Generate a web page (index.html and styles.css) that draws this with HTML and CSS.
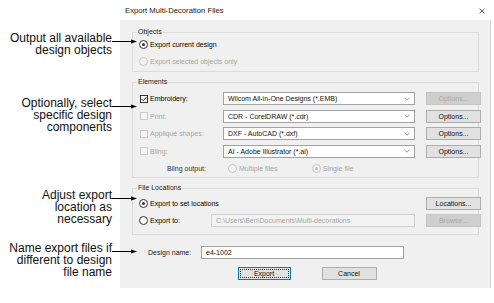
FILE: index.html
```html
<!DOCTYPE html>
<html lang="en">
<head>
<meta charset="UTF-8">
<title>Export Multi-Decoration Files</title>
<link rel="stylesheet" href="styles.css">
</head>
<body>

<div class="page">

    <!-- Подписи слева -->
    <div class="notes">
        <div class="note note-1">
            <div class="note-text">Output all available<br>design objects</div>
            <svg class="note-arrow" width="25" height="7" viewBox="0 0 25 7"><line x1="0" y1="3.5" x2="20" y2="3.5" stroke="#000" stroke-width="1"/><polygon points="19,1.5 25,3.5 19,5.5" fill="#000"/></svg>
        </div>
        <div class="note note-2">
            <div class="note-text">Optionally, select<br>specific design<br>components</div>
            <svg class="note-arrow" width="25" height="7" viewBox="0 0 25 7"><line x1="0" y1="3.5" x2="20" y2="3.5" stroke="#000" stroke-width="1"/><polygon points="19,1.5 25,3.5 19,5.5" fill="#000"/></svg>
        </div>
        <div class="note note-3">
            <div class="note-text">Adjust export<br>location as<br>necessary</div>
            <svg class="note-arrow" width="25" height="7" viewBox="0 0 25 7"><line x1="0" y1="3.5" x2="20" y2="3.5" stroke="#000" stroke-width="1"/><polygon points="19,1.5 25,3.5 19,5.5" fill="#000"/></svg>
        </div>
        <div class="note note-4">
            <div class="note-text">Name export files if<br>different to design<br>file name</div>
            <svg class="note-arrow" width="25" height="7" viewBox="0 0 25 7"><line x1="0" y1="3.5" x2="20" y2="3.5" stroke="#000" stroke-width="1"/><polygon points="19,1.5 25,3.5 19,5.5" fill="#000"/></svg>
        </div>
    </div>

    <!-- Окно диалога -->
    <div class="dialog">
        <div class="titlebar">
            <span class="title">Export Multi-Decoration Files</span>
            <svg class="close" width="6" height="6" viewBox="0 0 6 6"><path d="M0.5 0.5 L5.5 5.5 M5.5 0.5 L0.5 5.5" stroke="#444" stroke-width="0.8"/></svg>
        </div>

        <div class="dialog-body">

            <div class="group group-objects">
                <div class="group-title">Objects</div>
                <div class="option first"><span class="radio checked"></span>Export current design</div>
                <div class="option second disabled"><span class="radio"></span>Export selected objects only</div>
            </div>

            <div class="group group-elements">
                <div class="group-title">Elements</div>
                <div class="elements-grid">
                    <div class="option"><span class="check checked"><svg width="6" height="6" viewBox="0 0 6 6"><polyline points="0.5,3 2.3,4.8 5.6,0.9" fill="none" stroke="#222" stroke-width="0.9"/></svg></span>Embroidery:</div>
                    <div class="combo">Wilcom All-in-One Designs (*.EMB)<svg class="chevron" width="6" height="4" viewBox="0 0 6 4"><polyline points="0.5,0.8 3,3.2 5.5,0.8" fill="none" stroke="#777" stroke-width="0.8"/></svg></div>
                    <div class="btn disabled">Options...</div>

                    <div class="option disabled"><span class="check"></span>Print:</div>
                    <div class="combo">CDR - CorelDRAW (*.cdr)<svg class="chevron" width="6" height="4" viewBox="0 0 6 4"><polyline points="0.5,0.8 3,3.2 5.5,0.8" fill="none" stroke="#777" stroke-width="0.8"/></svg></div>
                    <div class="btn">Options...</div>

                    <div class="option disabled"><span class="check"></span>Appliqué shapes:</div>
                    <div class="combo">DXF - AutoCAD (*.dxf)<svg class="chevron" width="6" height="4" viewBox="0 0 6 4"><polyline points="0.5,0.8 3,3.2 5.5,0.8" fill="none" stroke="#777" stroke-width="0.8"/></svg></div>
                    <div class="btn">Options...</div>

                    <div class="option disabled"><span class="check"></span>Bling:</div>
                    <div class="combo">AI - Adobe Illustrator (*.ai)<svg class="chevron" width="6" height="4" viewBox="0 0 6 4"><polyline points="0.5,0.8 3,3.2 5.5,0.8" fill="none" stroke="#777" stroke-width="0.8"/></svg></div>
                    <div class="btn">Options...</div>

                    <div class="bling-label">Bling output:</div>
                    <div class="bling-options">
                        <span class="option multiple disabled"><span class="radio"></span>Multiple files</span>
                        <span class="option disabled"><span class="radio dotted"></span>Single file</span>
                    </div>
                </div>
            </div>

            <div class="group group-locations">
                <div class="group-title">File Locations</div>
                <div class="locations-grid">
                    <div class="option span-2"><span class="radio checked"></span>Export to set locations</div>
                    <div class="btn">Locations...</div>

                    <div class="option"><span class="radio"></span>Export to:</div>
                    <div class="field disabled">C:\Users\Ben\Documents\Multi-decorations</div>
                    <div class="btn disabled">Browse...</div>
                </div>
            </div>

            <div class="name-row">
                <span class="name-label">Design name:</span>
                <div class="field name-field">e4-1002</div>
            </div>

            <div class="actions">
                <div class="btn btn-default">Export</div>
                <div class="btn btn-cancel">Cancel</div>
            </div>

        </div>
    </div>
</div>

</body>
</html>
```

FILE: styles.css
```css
body, html {
    margin: 0;
    padding: 0;
    background-color: #ffffff;
}

.page {
    display: flex;
    align-items: flex-start;
    width: 494px;
    height: 303px;
    overflow: hidden;
}

/* Подписи */
.notes {
    width: 120px;
    flex-shrink: 0;
    padding-top: 32px;
    font-family: "Liberation Sans", Arial, sans-serif;
    font-size: 12px;
    line-height: 12px;
    color: #111111;
}

.note {
    display: flex;
    align-items: flex-start;
}

.note-text {
    width: 112px;
    flex-shrink: 0;
    text-align: right;
}

.note-arrow {
    display: block;
    flex-shrink: 0;
    margin-top: 5.5px;
    margin-right: -17px;
    position: relative;
    z-index: 2;
}

.note-2 { margin-top: 41px; }
.note-3 { margin-top: 56px; }
.note-4 { margin-top: 17px; }

/* Диалог */
.dialog {
    width: 371px;
    flex-shrink: 0;
    display: flex;
    flex-direction: column;
    font-family: "Liberation Sans", Arial, sans-serif;
    font-size: 7px;
    color: #000000;
}

.titlebar {
    height: 20px;
    display: flex;
    align-items: center;
    justify-content: space-between;
    padding: 1px 6px 0 5px;
    box-sizing: border-box;
    background-color: #ffffff;
}

.title {
    font-size: 7.7px;
    color: #1a1a1a;
}

.close {
    display: block;
}

.dialog-body {
    background-color: #f0f0f0;
    border-right: 1px solid #d4d4d4;
    padding: 12px 11px 8px 12px;
}

.group {
    border: 1px solid #dcdcdc;
    padding: 0 8px 3px 7px;
}

.group-title {
    height: 10px;
    line-height: 10px;
    margin: -6px 0 0 -3px;
    padding: 0 1px;
    background-color: #f0f0f0;
    align-self: flex-start;
    width: max-content;
    color: #1a1a1a;
}

.group-elements,
.group-locations {
    margin-top: 10px;
}

.group-elements {
    padding-bottom: 2px;
}

.group-locations {
    padding-bottom: 7px;
}

.option {
    display: flex;
    align-items: center;
    height: 13px;
    white-space: nowrap;
}

.option.first { margin-top: 1px; }
.option.second { margin-top: 4px; }

.disabled {
    color: #a6a6a6;
}

.radio {
    width: 9px;
    height: 9px;
    box-sizing: border-box;
    border: 1px solid #333333;
    border-radius: 50%;
    background-color: #ffffff;
    margin: 0 2px 0 -1px;
    flex-shrink: 0;
    position: relative;
}

.radio.checked::after,
.radio.dotted::after {
    content: "";
    position: absolute;
    left: 2px;
    top: 2px;
    width: 3px;
    height: 3px;
    border-radius: 50%;
    background-color: #333333;
}

.disabled .radio {
    border-color: #c6c6c6;
    background-color: #f4f4f4;
}

.disabled .radio.dotted::after {
    background-color: #c0c0c0;
}

.check {
    width: 8px;
    height: 8px;
    box-sizing: border-box;
    border: 1px solid #333333;
    background-color: #ffffff;
    margin-right: 2px;
    flex-shrink: 0;
    display: flex;
    align-items: center;
    justify-content: center;
}

.check svg {
    display: block;
}

.disabled .check {
    border-color: #cccccc;
    background-color: #f6f6f6;
}

.elements-grid {
    display: grid;
    grid-template-columns: 72px 192px 55px;
    grid-auto-rows: 13px;
    column-gap: 11px;
    row-gap: 4.5px;
    margin-top: 5px;
}

.combo {
    display: flex;
    align-items: center;
    justify-content: space-between;
    border: 1px solid #a2a2a2;
    background-color: #ffffff;
    padding: 0 4px 0 4px;
    box-sizing: border-box;
    white-space: nowrap;
    color: #111111;
}

.chevron {
    display: block;
}

.btn {
    display: flex;
    align-items: center;
    justify-content: center;
    height: 13px;
    box-sizing: border-box;
    border: 1px solid #adadad;
    background-color: #e1e1e1;
    color: #111111;
    white-space: nowrap;
}

.btn.disabled {
    border-color: #c4c4c4;
    background-color: #cfcfcf;
    color: #a8a8a8;
}

.bling-label {
    display: flex;
    align-items: center;
    justify-content: flex-end;
    padding-right: 6px;
    color: #333333;
}

.bling-options {
    display: flex;
    align-items: center;
    padding-left: 6px;
}

.option.multiple {
    width: 84px;
}

.locations-grid {
    display: grid;
    grid-template-columns: 60px 204px 55px;
    grid-auto-rows: 13px;
    column-gap: 11px;
    row-gap: 4px;
    margin-top: 4px;
}

.span-2 {
    grid-column: span 2;
}

.field {
    display: flex;
    align-items: center;
    box-sizing: border-box;
    border: 1px solid #a2a2a2;
    background-color: #ffffff;
    padding-left: 4px;
    white-space: nowrap;
}

.field.disabled {
    border-color: #d0d0d0;
    background-color: #f3f3f3;
    color: #a6a6a6;
}

.name-row {
    display: flex;
    align-items: center;
    height: 13px;
    margin-top: 11px;
    padding-left: 16px;
}

.name-label {
    width: 53px;
    color: #1a1a1a;
}

.name-field {
    width: 203px;
    height: 13px;
    color: #111111;
}

.actions {
    display: flex;
    justify-content: center;
    gap: 31px;
    margin-top: 8px;
    padding-left: 3px;
}

.btn-default {
    width: 53px;
    border-color: #0078d7;
    outline: 1px dotted #333333;
    outline-offset: -3px;
}

.btn-cancel {
    width: 55px;
}
```
